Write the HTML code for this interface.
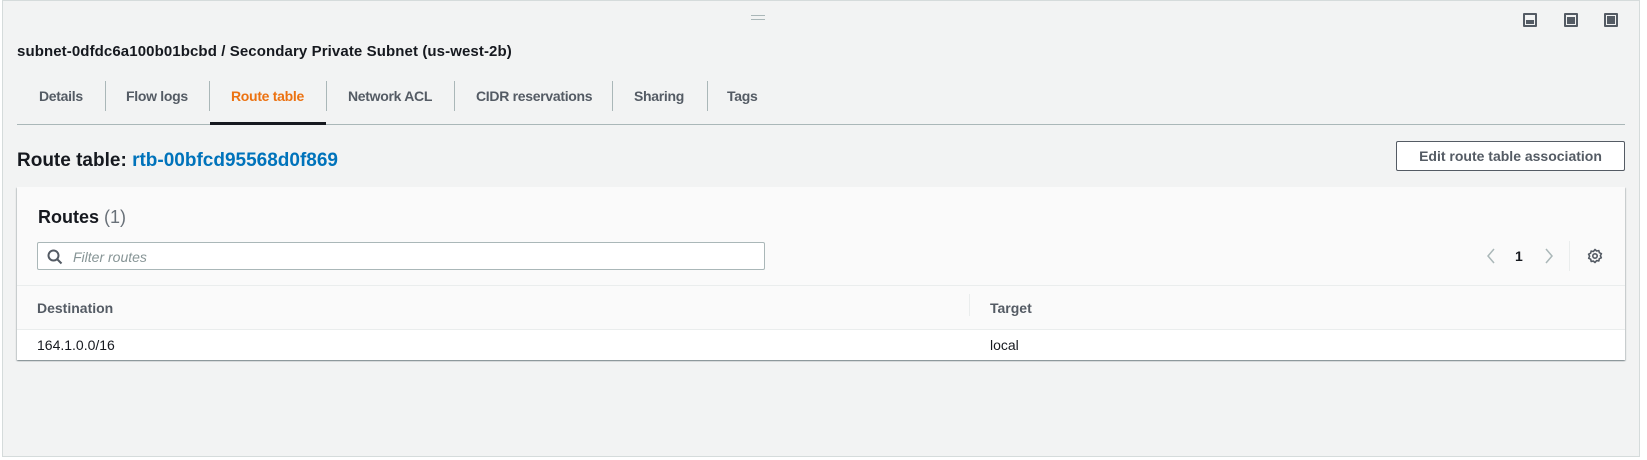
<!DOCTYPE html>
<html><head><meta charset="utf-8"><style>
*{box-sizing:border-box;margin:0;padding:0}
body{width:1647px;height:460px;background:#fff;font-family:"Liberation Sans",sans-serif;position:relative;overflow:hidden}
.outer{position:absolute;left:2px;top:0;width:1638px;height:457px;background:#f2f3f3;border:1px solid #d5dbdb}
.a{position:absolute;white-space:nowrap}
.tab{position:absolute;top:88px;font-size:14px;font-weight:bold;color:#545b64;letter-spacing:-0.3px}
.sep{position:absolute;top:81px;width:1px;height:30px;background:#aab7b8}
.ico{position:absolute;top:13px;width:14px;height:14px;border:2px solid #545b64;border-radius:1px}
.ico i{position:absolute;left:1px;right:1px;bottom:1px;background:#545b64}
</style></head><body>
<div class="outer"></div>
<div class="a" style="left:751px;top:15px;width:14px;height:1px;background:#aab7b8"></div>
<div class="a" style="left:751px;top:19px;width:14px;height:1px;background:#aab7b8"></div>
<div class="ico" style="left:1523px"><i style="height:4px"></i></div>
<div class="ico" style="left:1564px"><i style="height:7px"></i></div>
<div class="ico" style="left:1604px"><i style="top:1px;height:auto"></i></div>
<div class="a" style="left:17px;top:43px;font-size:15px;font-weight:bold;color:#16191f;letter-spacing:0.1px">subnet-0dfdc6a100b01bcbd / Secondary Private Subnet (us-west-2b)</div>
<div class="tab" style="left:39px">Details</div>
<div class="sep" style="left:105px"></div>
<div class="tab" style="left:126px">Flow logs</div>
<div class="sep" style="left:209px"></div>
<div class="tab" style="left:231px;color:#ec7211">Route table</div>
<div class="sep" style="left:326px"></div>
<div class="tab" style="left:348px">Network ACL</div>
<div class="sep" style="left:454px"></div>
<div class="tab" style="left:476px">CIDR reservations</div>
<div class="sep" style="left:612px"></div>
<div class="tab" style="left:634px">Sharing</div>
<div class="sep" style="left:707px"></div>
<div class="tab" style="left:727px">Tags</div>
<div class="a" style="left:17px;top:124px;width:1608px;height:1px;background:#aab7b8"></div>
<div class="a" style="left:210px;top:122px;width:116px;height:3px;background:#16191f"></div>
<div class="a" style="left:17px;top:150px;font-size:19px;font-weight:bold;color:#16191f">Route table: <span style="color:#0073bb">rtb-00bfcd95568d0f869</span></div>
<div class="a" style="left:1396px;top:141px;width:229px;height:30px;border:1px solid #545b64;border-radius:2px;background:#fff;font-size:14px;font-weight:bold;color:#545b64;text-align:center;line-height:28px">Edit route table association</div>
<div class="a" style="left:17px;top:187px;width:1608px;height:173px;background:#fafafa;box-shadow:0 1px 1px rgba(0,28,36,.3),1px 1px 1px rgba(0,28,36,.15),-1px 1px 1px rgba(0,28,36,.15);overflow:hidden">
 <div class="a" style="left:21px;top:20px;font-size:18px;font-weight:bold;color:#16191f">Routes <span style="font-weight:normal;color:#687078">(1)</span></div>
 <div class="a" style="left:20px;top:55px;width:728px;height:28px;border:1px solid #aab7b8;border-radius:2px;background:#fff">
  <svg class="a" style="left:9px;top:6px" width="16" height="16" viewBox="0 0 16 16"><circle cx="6.5" cy="6.5" r="5" fill="none" stroke="#545b64" stroke-width="2"/><path d="M10 10l4.5 4.5" stroke="#545b64" stroke-width="2"/></svg>
  <div class="a" style="left:35px;top:6px;font-size:14px;font-style:italic;color:#879596">Filter routes</div>
 </div>
 <svg class="a" style="left:1468px;top:60px" width="12" height="18" viewBox="0 0 12 18"><path d="M9 2L3 9l6 7" fill="none" stroke="#aab7b8" stroke-width="1.5"/></svg>
 <div class="a" style="left:1498px;top:61px;font-size:14px;font-weight:bold;color:#16191f">1</div>
 <svg class="a" style="left:1526px;top:60px" width="12" height="18" viewBox="0 0 12 18"><path d="M3 2l6 7-6 7" fill="none" stroke="#aab7b8" stroke-width="1.5"/></svg>
 <div class="a" style="left:1552px;top:54px;width:1px;height:30px;background:#eaeded"></div>
 <svg class="a" style="left:1570px;top:61px" width="16" height="16" viewBox="0 0 16 16"><path d="M8 1.5l1.6 1.5 2.2-.4.6 2.1 2 1-1 2 .9 2.1-2 .9-.5 2.2-2.2-.3L8 14.5l-1.6-1.4-2.2.3-.5-2.2-2-.9.9-2.1-1-2 2-1 .6-2.1 2.2.4z" fill="none" stroke="#545b64" stroke-width="1.6" stroke-linejoin="round"/><circle cx="8" cy="8" r="2.2" fill="none" stroke="#545b64" stroke-width="1.6"/></svg>
 <div class="a" style="left:0;top:98px;width:1608px;height:1px;background:#eaeded"></div>
 <div class="a" style="left:20px;top:113px;font-size:14px;font-weight:bold;color:#545b64">Destination</div>
 <div class="a" style="left:952px;top:107px;width:1px;height:22px;background:#eaeded"></div>
 <div class="a" style="left:973px;top:113px;font-size:14px;font-weight:bold;color:#545b64">Target</div>
 <div class="a" style="left:0;top:142px;width:1608px;height:31px;background:#fff;border-top:1px solid #eaeded"></div>
 <div class="a" style="left:20px;top:150px;font-size:14px;color:#16191f">164.1.0.0/16</div>
 <div class="a" style="left:973px;top:150px;font-size:14px;color:#16191f">local</div>
</div>
</body></html>
